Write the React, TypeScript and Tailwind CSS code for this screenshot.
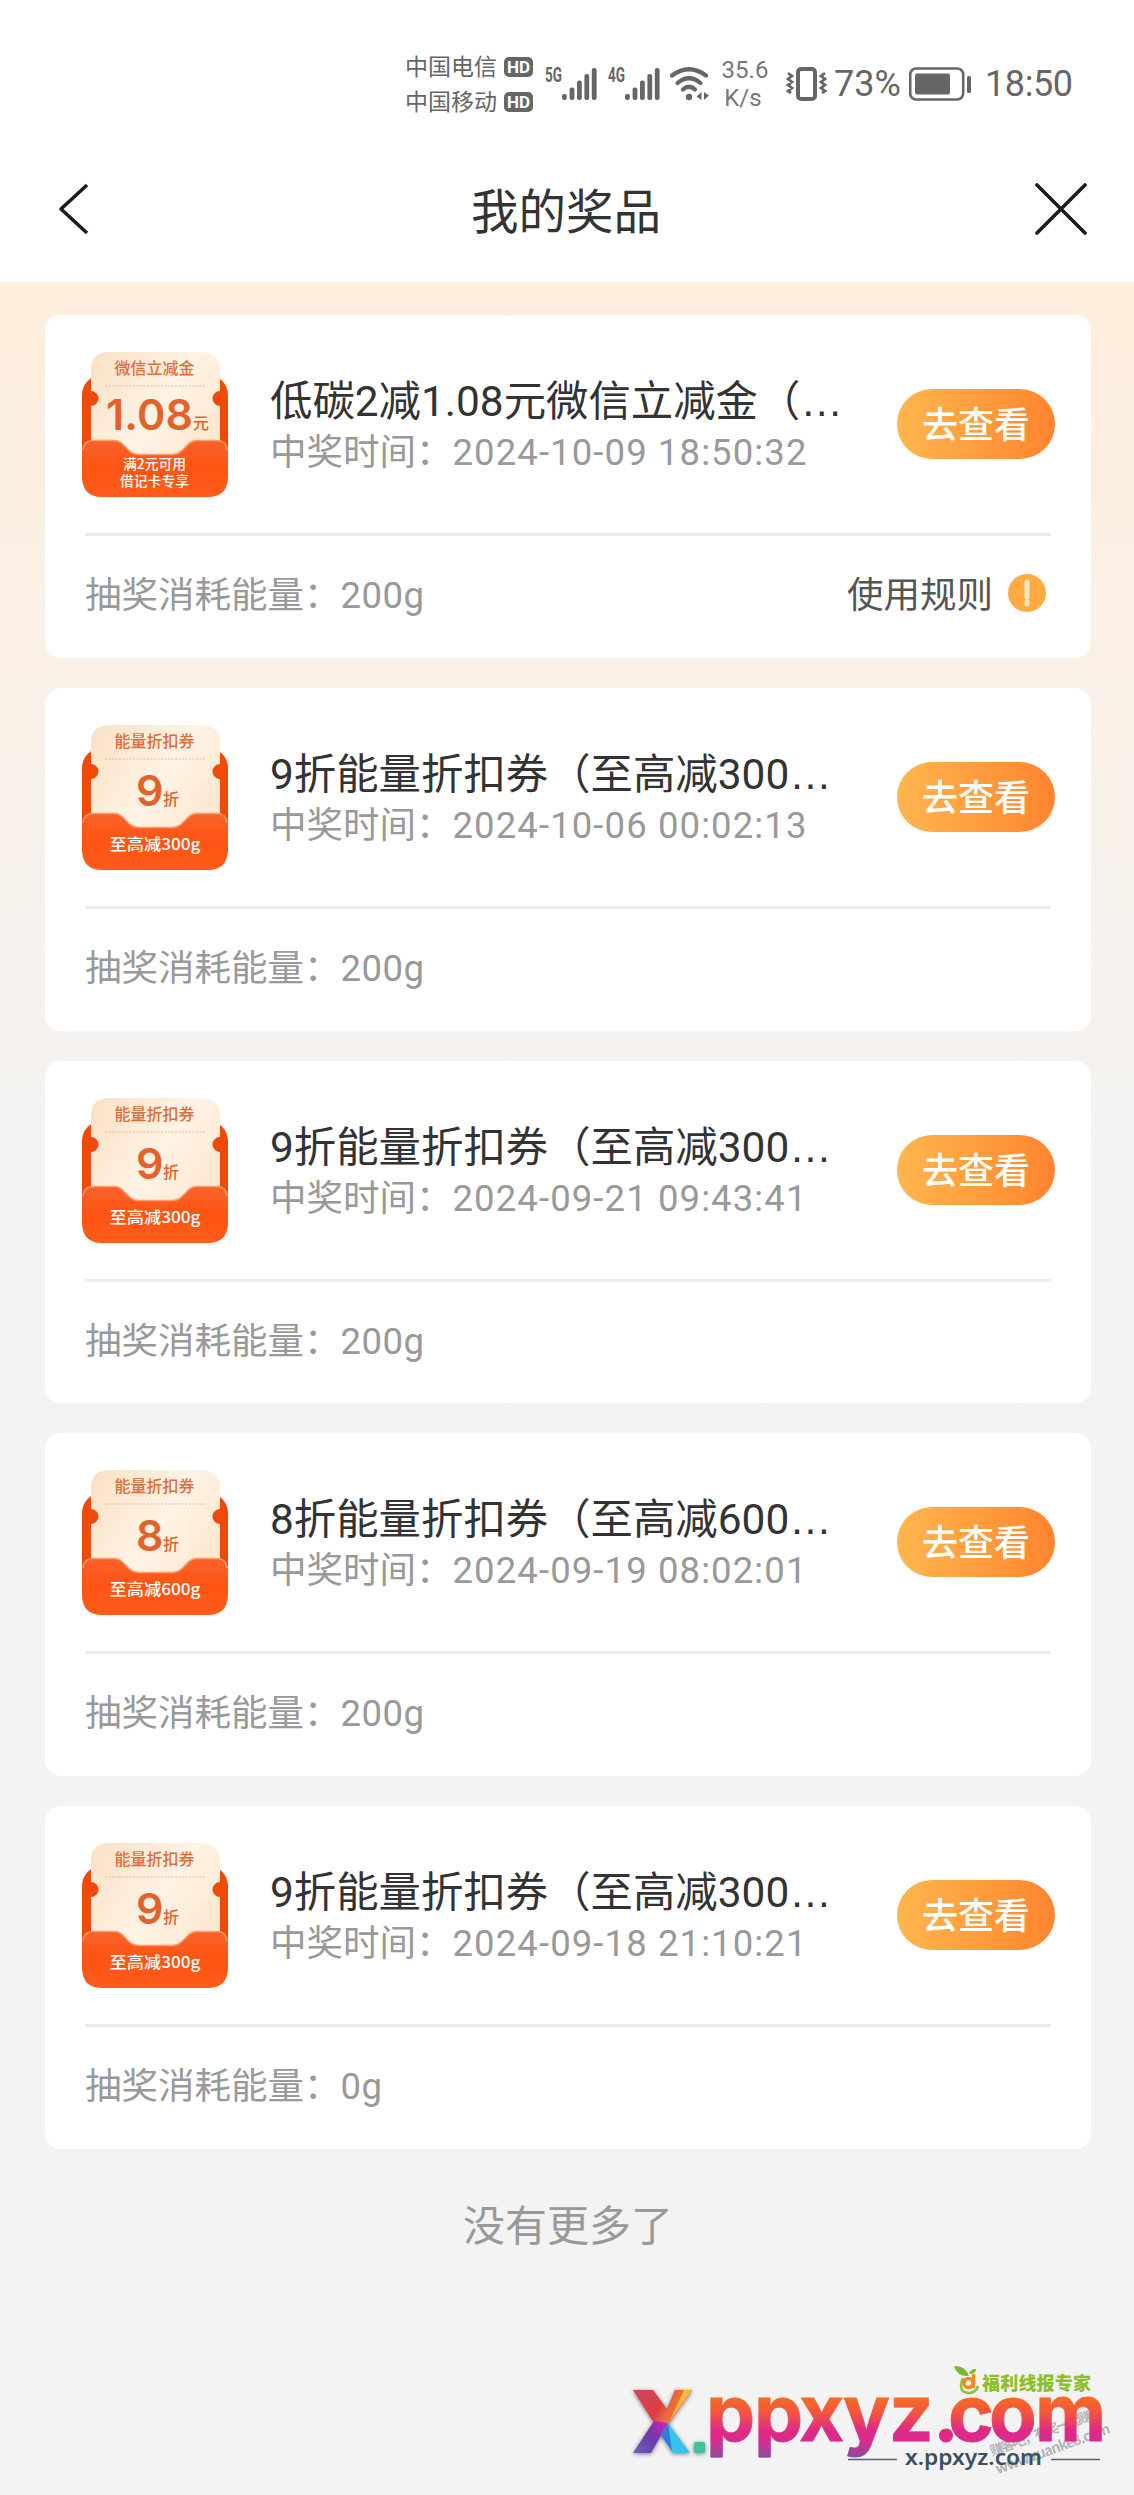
interface Prize {
  id: number;
  title: string;
  time: string;
  energy: string;
  hasRules?: boolean;
  coupon: {
    name: string;
    value: string;
    unit: string;
    notes: string[];
  };
}

// Titles arrive already shortened, the ellipsis is added by the card
const PRIZES: Prize[] = [
  {
    id: 1,
    title: "低碳2减1.08元微信立减金（",
    time: "2024-10-09 18:50:32",
    energy: "200g",
    hasRules: true,
    coupon: { name: "微信立减金", value: "1.08", unit: "元", notes: ["满2元可用", "借记卡专享"] },
  },
  {
    id: 2,
    title: "9折能量折扣券（至高减300",
    time: "2024-10-06 00:02:13",
    energy: "200g",
    coupon: { name: "能量折扣券", value: "9", unit: "折", notes: ["至高减300g"] },
  },
  {
    id: 3,
    title: "9折能量折扣券（至高减300",
    time: "2024-09-21 09:43:41",
    energy: "200g",
    coupon: { name: "能量折扣券", value: "9", unit: "折", notes: ["至高减300g"] },
  },
  {
    id: 4,
    title: "8折能量折扣券（至高减600",
    time: "2024-09-19 08:02:01",
    energy: "200g",
    coupon: { name: "能量折扣券", value: "8", unit: "折", notes: ["至高减600g"] },
  },
  {
    id: 5,
    title: "9折能量折扣券（至高减300",
    time: "2024-09-18 21:10:21",
    energy: "0g",
    coupon: { name: "能量折扣券", value: "9", unit: "折", notes: ["至高减300g"] },
  },
];

function Carrier({ name }: { name: string }) {
  return (
    <div className="flex h-[35px] items-center gap-[7px]">
      <span className="pb-[3px] text-[23px] leading-8">{name}</span>
      <span className="flex h-5 w-[29px] items-center justify-center rounded-[5px] bg-[#666] font-['Roboto'] text-[17px] font-bold leading-5 text-white">
        HD
      </span>
    </div>
  );
}

function Signal({ label }: { label: string }) {
  return (
    <svg className="overflow-visible" width="52" height="34" viewBox="0 0 52 34" fill="#666">
      <text x="0" y="14.5" fontFamily="Roboto" fontSize="19.5" fontWeight="700" textLength="17" lengthAdjust="spacingAndGlyphs">
        {label}
      </text>
      <rect x="17" y="27" width="4.8" height="6" rx="2" />
      <rect x="24.6" y="20.5" width="4.8" height="12.5" rx="2" />
      <rect x="32" y="13.5" width="4.8" height="19.5" rx="2" />
      <rect x="39.4" y="7" width="4.8" height="26" rx="2" />
      <rect x="46.8" y="1" width="4.8" height="32" rx="2" />
    </svg>
  );
}

function StatusBar() {
  return (
    <div className="flex h-[138px] pt-[49px] pl-[405px] text-[#666]">
      <div className="flex h-[70px] flex-col">
        <Carrier name="中国电信" />
        <Carrier name="中国移动" />
      </div>
      <div className="flex h-[70px] items-center">
        <div className="ml-3 flex gap-[11px]">
          <Signal label="5G" />
          <Signal label="4G" />
        </div>
        <svg className="ml-2.5" width="40" height="34" viewBox="0 0 40 34" fill="none" stroke="#666" strokeLinecap="round">
          <path d="M2 8.5Q19 -4 36 8.5" strokeWidth="4.2" />
          <path d="M7.5 16Q19 6.5 30.5 16" strokeWidth="4.2" />
          <path d="M13 22.5Q19 17 25 22.5" strokeWidth="4.2" />
          <circle cx="19" cy="30" r="3.2" fill="#666" stroke="none" />
          <path d="M31.5 25v8l-5-3.5zM34 25v8l5-4.5z" fill="#666" stroke="none" />
        </svg>
        <div className="ml-[11px] w-12 text-center font-['Roboto'] text-[24px] leading-[28px] text-[#777]">
          <div>35.6</div>
          <div className="pr-1">K/s</div>
        </div>
        <svg className="ml-[17px]" width="42" height="34" viewBox="0 0 42 34" fill="none" stroke="#666">
          <rect x="12" y="2" width="17" height="30" rx="3" strokeWidth="4" />
          <path d="M2 6l4 3-4 3 4 3-4 3 4 3-4 3 3 2M39 6l-4 3 4 3-4 3 4 3-4 3 4 3-3 2" strokeWidth="2.8" />
        </svg>
        <span className="ml-[6px] w-[69px] font-['Roboto'] text-[36px] leading-[44px]">73%</span>
        <svg className="ml-[6px]" width="64" height="34" viewBox="0 0 64 34">
          <rect x="1.2" y="1.5" width="53" height="31" rx="6" fill="none" stroke="#666" strokeWidth="2.6" />
          <rect x="6" y="6.5" width="35" height="21" rx="2" fill="#666" />
          <rect x="58" y="9" width="4" height="17" rx="1.5" fill="#666" />
        </svg>
        <span className="ml-[12px] font-['Roboto'] text-[36px] leading-[44px] tracking-[-0.4px]">18:50</span>
      </div>
    </div>
  );
}

function NavBar() {
  return (
    <div className="flex h-[142px] items-center justify-between pr-[47px] pl-[57px]">
      <svg width="32" height="52" viewBox="0 0 32 52" fill="none" stroke="#1c1c1c" strokeWidth="3.6">
        <path d="M30 2L4 26l26 24" strokeLinejoin="round" />
      </svg>
      <h1 className="pl-2 text-[47.5px] leading-[60px] text-[#333]">我的奖品</h1>
      <svg width="52" height="52" viewBox="0 0 52 52" stroke="#1c1c1c" strokeWidth="3.6" strokeLinecap="round">
        <path d="M2 2l48 48M50 2L2 50" />
      </svg>
    </div>
  );
}

function CouponIcon({ coupon }: { coupon: Prize["coupon"] }) {
  const isAmount = coupon.value.length > 1;
  return (
    <svg className="shrink-0" width="146" height="146" viewBox="0 0 146 146">
      <defs>
        <linearGradient id="ticket" x1="0" y1="0" x2="1" y2="0.6">
          <stop offset="0" stopColor="#fae0c4" />
          <stop offset="0.6" stopColor="#fef3e5" />
          <stop offset="1" stopColor="#fde8d0" />
        </linearGradient>
        <linearGradient id="pocket" x1="0" y1="0" x2="0" y2="1">
          <stop offset="0" stopColor="#f9622b" />
          <stop offset="0.5" stopColor="#ff5413" />
          <stop offset="1" stopColor="#fd5c1c" />
        </linearGradient>
      </defs>
      <rect x="0" y="23" width="146" height="110" rx="20" fill="#f04a0a" />
      <path
        d="M9 16Q10 0 28 0H118Q137 0 138 16V39A7.5 7.5 0 0 0 138 54V120H9V54A7.5 7.5 0 0 0 9 39Z"
        fill="url(#ticket)"
      />
      <path d="M23 34H124" stroke="#e9b98f" strokeWidth="1" strokeDasharray="2 1.5" />
      <path
        d="M0 98Q1 88 11 88H32Q37 88 41 92L47 98Q51 102 57 102H90Q96 102 100 98L106 92Q110 88 115 88H135Q145 88 146 98V126Q145 145 126 145H20Q1 145 0 126Z"
        fill="url(#pocket)"
      />
      <path
        d="M1 98Q2 88.5 11 88.5H32Q37 88.5 41 92.5L47 98.5Q51 102.5 57 102.5H90Q96 102.5 100 98.5L106 92.5Q110 88.5 115 88.5H135Q144 88.5 145 98"
        fill="none"
        stroke="#ff9a6b"
        strokeWidth="1.5"
      />
      <g fontFamily="'Noto Sans CJK SC', sans-serif" fontWeight="500">
        <text x="72.5" y="22" fontSize="16" fill="#df6c3a" textAnchor="middle">
          {coupon.name}
        </text>
        <g fill="#e3622c">
          <text
            x={isAmount ? 24 : 54}
            y={isAmount ? 78 : 81}
            fontFamily="Inter"
            fontSize="43"
            fontWeight="600"
            textLength={isAmount ? 87 : undefined}
          >
            {coupon.value}
          </text>
          <text x={isAmount ? 111 : 81} y={isAmount ? 77 : 80} fontSize="16">
            {coupon.unit}
          </text>
        </g>
        <g fill="#fff" textAnchor="middle">
          {coupon.notes.length > 1 ? (
            coupon.notes.map((note, i) => (
              <text key={note} x="72.5" y={116.5 + i * 17} fontSize="13.8">
                {note}
              </text>
            ))
          ) : (
            <text x="73" y="125" fontSize="16" textLength="91" lengthAdjust="spacingAndGlyphs">
              {coupon.notes[0]}
            </text>
          )}
        </g>
      </g>
    </svg>
  );
}

function PrizeCard({ prize }: { prize: Prize }) {
  return (
    <article className="h-[342.8px] rounded-2xl bg-white pt-[37px] pr-9 pl-[37px]">
      <div className="flex h-[146px]">
        <CouponIcon coupon={prize.coupon} />
        <div className="ml-[42px] pt-6 font-['Roboto','Noto_Sans_CJK_SC',sans-serif]">
          <h2 className="text-[42.4px] leading-[52px] whitespace-nowrap text-[#333]">
            {prize.title}
            <span className="font-['Liberation_Sans']">…</span>
          </h2>
          <p className="flex text-[36.5px] leading-[50px] text-[#999]">
            <span>中奖时间：</span>
            <span className="tracking-[1.1px]">{prize.time}</span>
          </p>
        </div>
        <button className="mt-[37px] ml-auto flex h-[70px] w-[158px] items-center justify-center rounded-full bg-linear-to-r from-[#ffb64d] to-[#ff842f] pb-1 text-[36px] font-medium leading-[50px] text-white">
          去查看
        </button>
      </div>
      <div className="mr-1 ml-[3px] mt-[35px] flex h-[124px] items-center justify-between border-t-3 border-[#ececec] font-['Roboto','Noto_Sans_CJK_SC',sans-serif] text-[36.5px] leading-[50px] text-[#999]">
        <div className="pb-px">
          抽奖消耗能量：<span className="tracking-[0.5px]">{prize.energy}</span>
        </div>
        {prize.hasRules && (
          <div className="mr-[5px] flex items-center gap-[15px] pb-px text-[#555]">
            使用规则
            <svg className="mb-1.5" width="38" height="38" viewBox="0 0 38 38">
              <circle cx="19" cy="19" r="19" fill="#fdab42" />
              <path d="M19 8V23M19 28V30" stroke="#ffe9c4" strokeWidth="5" strokeLinecap="round" />
            </svg>
          </div>
        )}
      </div>
    </article>
  );
}

function SiteMarks() {
  return (
    <svg className="block" width="514" height="145" viewBox="0 0 514 145">
      <defs>
        <linearGradient id="wordmark" gradientUnits="userSpaceOnUse" x1="0" y1="48" x2="0" y2="107">
          <stop offset="0" stopColor="#f46a25" />
          <stop offset="0.25" stopColor="#f4553f" />
          <stop offset="0.55" stopColor="#dd2a86" />
          <stop offset="0.72" stopColor="#dc2a8c" />
          <stop offset="1" stopColor="#8c4ba0" />
        </linearGradient>
        <linearGradient id="xTop" x1="0" y1="0" x2="1" y2="0.3">
          <stop offset="0" stopColor="#cf4560" />
          <stop offset="0.55" stopColor="#dc3f45" />
          <stop offset="1" stopColor="#f8ae3c" />
        </linearGradient>
        <linearGradient id="xLeft" x1="1" y1="0" x2="0" y2="1">
          <stop offset="0" stopColor="#d91fc0" />
          <stop offset="0.5" stopColor="#6a3aa8" />
          <stop offset="1" stopColor="#6b62bd" />
        </linearGradient>
      </defs>
      <g fill="#999" fontFamily="'Noto Sans CJK SC', sans-serif" fontWeight="700" transform="rotate(-20 375 105)" opacity="0.7">
        <text x="372" y="105" fontSize="13.5" textLength="119">
          赚客吧，有奖一起赚！
        </text>
        <text x="371" y="124" fontSize="14.5" textLength="121">
          www.zuanke8.com
        </text>
      </g>
      <g style={{ filter: "drop-shadow(0 1px 2px rgb(0 0 0 / 0.5))" }}>
        <path d="M13 40H33L47 59L55 40H72L49 73H34Z" fill="url(#xTop)" />
        <path d="M72 40L49 73L46 64L60 40Z" fill="#ee6a35" />
        <path d="M72 40L49 72L64 40Z" fill="#f3b83c" />
        <path d="M34 71L48 73L31 103H13Z" fill="url(#xLeft)" />
        <path d="M48 73L70 103H53L41 85Z" fill="#35c5e8" />
        <path d="M48 73L41 85L52 101Z" fill="#3178d8" />
        <rect x="74" y="92" width="11" height="11" rx="2" fill="#43c09b" />
      </g>
      <text
        x="86 134 179 223 269 313 328 369 415"
        y="91"
        fontFamily="Inter, sans-serif"
        fontSize="78"
        fontWeight="700"
        fill="url(#wordmark)"
        stroke="url(#wordmark)"
        strokeWidth="0.8"
      >
        ppxyz.com
      </text>
      <path d="M228 109.5H277M431 109.5H480" stroke="#53666f" strokeWidth="1.6" />
      <text x="285" y="115" fontFamily="'Noto Sans', sans-serif" fontSize="22" fontWeight="600" fill="#3b5161" textLength="137" lengthAdjust="spacingAndGlyphs">
        x.ppxyz.com
      </text>
      <g transform="translate(20 0)">
        <path d="M314 16Q325 15 329 26Q317 27 314 16ZM329 24Q330 19 336 19Q336 24 329 24Z" fill="#7cb928" />
        <path d="M323 28Q317 43 330 43Q336 42 338 36" fill="none" stroke="#8cc22e" strokeWidth="2.6" />
        <circle cx="328.5" cy="33" r="4.5" fill="none" stroke="#f08a1d" strokeWidth="3.6" />
        <path d="M333.5 24V38" stroke="#f08a1d" strokeWidth="3.4" />
        <text x="342" y="40" fontFamily="'Noto Sans CJK SC', sans-serif" fontSize="18" fontWeight="900" fill="#8cbf2a" textLength="109">
          福利线报专家
        </text>
      </g>
    </svg>
  );
}

export default function App() {
  return (
    <div className="h-[2495px] w-[1134px] overflow-hidden bg-[#f3f3f3] font-['Noto_Sans_CJK_SC',sans-serif]">
      <header className="h-[282px] bg-white">
        <StatusBar />
        <NavBar />
      </header>
      <main className="h-[2068px] bg-linear-to-b from-[#feeedd] via-[#f3f3f3] via-45% to-[#f3f3f3] pt-[33px] pr-[43px] pl-[45px]">
        <div className="flex flex-col gap-[30px]">
          {PRIZES.map((prize) => (
            <PrizeCard key={prize.id} prize={prize} />
          ))}
        </div>
        <p className="mt-[50px] text-center text-[42px] leading-[48px] text-[#999]">没有更多了</p>
      </main>
      <footer className="flex justify-end">
        <SiteMarks />
      </footer>
    </div>
  );
}
